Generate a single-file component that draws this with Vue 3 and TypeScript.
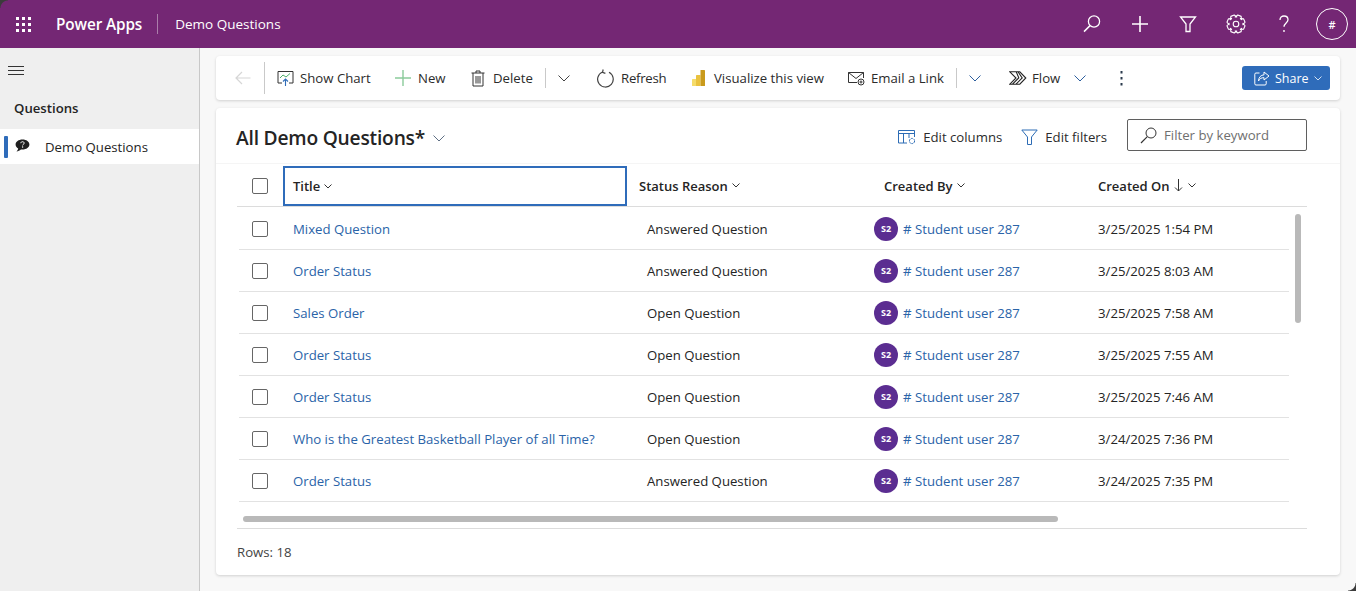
<template>
  <div class="app">
    <header class="topbar">
      <svg class="waffle" width="15" height="15" viewBox="0 0 15 15" fill="#fff">
        <rect v-for="d in waffleDots" :key="d.k" :x="d.x" :y="d.y" width="3" height="3" />
      </svg>
      <span class="brand">Power Apps</span>
      <span class="brand-sep"></span>
      <span class="app-name">Demo Questions</span>
      <div class="top-icons">
        <svg width="20" height="20" viewBox="0 0 20 20" fill="none" stroke="#fff" stroke-width="1.3">
          <circle cx="12" cy="7.5" r="5.6" />
          <path d="M8 11.6 2 17.6" stroke-width="1.5" />
        </svg>
        <svg width="20" height="20" viewBox="0 0 20 20" stroke="#fff" stroke-width="1.6">
          <path d="M10 2v16M2 10h16" />
        </svg>
        <svg width="20" height="20" viewBox="0 0 20 20" fill="none" stroke="#fff" stroke-width="1.3">
          <path d="M2.5 3h15l-5.5 7v7.5H8V10z" />
        </svg>
        <svg width="20" height="20" viewBox="0 0 20 20" fill="none" stroke="#fff" stroke-width="1.1">
          <circle cx="10" cy="10" r="2.8" />
          <path :d="gearPath" stroke-linejoin="round" />
        </svg>
        <svg width="20" height="20" viewBox="0 0 20 20" fill="none" stroke="#fff" stroke-width="1.3">
          <path d="M6 6c0-2.500 1.800-4 4-4s4 1.500 4 3.800c0 3-4 3.400-4 7" />
          <circle cx="10" cy="17" r=".9" fill="#fff" stroke="none" />
        </svg>
      </div>
      <div class="me">#</div>
    </header>

    <div class="body">
      <aside class="sidebar">
        <svg class="burger" width="16" height="10" viewBox="0 0 16 10" stroke="#333" stroke-width="1">
          <path d="M0 .5h16M0 4.500h16M0 8.500h16" />
        </svg>
        <div class="nav-group">Questions</div>
        <div class="nav-item">
          <span class="nav-mark"></span>
          <svg width="15" height="14" viewBox="0 0 15 14">
            <path d="M7.500.5C3.600.5.600 2.700.6 5.600c0 1.700 1 3.100 2.600 4-.1 1-.7 2-1.700 2.900 1.700-.2 3.300-1 4.400-2 .5.100 1 .1 1.600.1 3.900 0 6.900-2.200 6.900-5S11.400.5 7.500.5z" fill="#1f1f1f" />
            <path d="M5.800 4.200c.1-1 .8-1.500 1.700-1.500s1.700.6 1.700 1.400c0 1.200-1.600 1.200-1.600 2.300" fill="none" stroke="#fff" stroke-width="1" />
            <circle cx="7.600" cy="8" r=".7" fill="#fff" />
          </svg>
          <span class="nav-text">Demo Questions</span>
        </div>
      </aside>

      <main class="main">
        <section class="cmdbar">
          <svg class="back" width="16" height="14" viewBox="0 0 16 14" fill="none" stroke="#d6d6d6" stroke-width="1.2">
            <path d="M15.500 7H1M7 1 1 7l6 6" />
          </svg>
          <span class="sep sep-back"></span>

          <div class="cmd cmd-chart">
            <svg width="17" height="16" viewBox="0 0 17 16" fill="none">
              <path d="M5 13H1V1.500h15V13h-4" stroke="#333" stroke-width="1" />
              <path d="M3 8l3-3 3 2 4-3.500" stroke="#4caf6a" stroke-width="1" />
              <path d="M8.500 16V9.500M6 11.500l2.500-2.500 2.500 2.500" stroke="#2f6db8" stroke-width="1.100" />
            </svg>
            <span>Show Chart</span>
          </div>
          <div class="cmd cmd-new">
            <svg width="16" height="16" viewBox="0 0 16 16" stroke="#8bcb9b" stroke-width="1.400">
              <path d="M8 0v16M0 8h16" />
            </svg>
            <span>New</span>
          </div>
          <div class="cmd cmd-delete">
            <svg width="14" height="17" viewBox="0 0 14 17" fill="none" stroke="#333" stroke-width="1">
              <path d="M.5 3h13M5 3V1h4v2M2 3v13h10V3M5 6v7.500M7 6v7.500M9 6v7.500" />
            </svg>
            <span>Delete</span>
          </div>
          <span class="sep sep-delete"></span>
          <svg class="chev chev-delete" width="12" height="7" viewBox="0 0 12 7" fill="none" stroke="#444" stroke-width="1">
            <path d="M.5.500 6 6l5.500-5.500" />
          </svg>

          <div class="cmd cmd-refresh">
            <svg width="18" height="19" viewBox="0 0 18 19" fill="none" stroke="#444" stroke-width="1.200">
              <path d="M12 3.300A7.800 7.800 0 1 1 5.500 3M6.200.5 5.500 3.300 8.400 4.400" />
            </svg>
            <span>Refresh</span>
          </div>
          <div class="cmd cmd-viz">
            <svg width="15" height="16" viewBox="0 0 15 16">
              <rect x="1" y="9" width="4.500" height="7" rx=".6" fill="#f5dc6a" />
              <rect x="5" y="5" width="4.500" height="11" rx=".6" fill="#eac23f" />
              <rect x="9.500" y="0" width="4.500" height="16" rx=".6" fill="#c99a1c" />
            </svg>
            <span>Visualize this view</span>
          </div>
          <div class="cmd cmd-email">
            <svg width="17" height="15" viewBox="0 0 17 15" fill="none" stroke="#333" stroke-width="1">
              <path d="M9 11.500H.5v-10h15V7M.5 1.500 8 7.500l7.500-6" />
              <circle cx="13" cy="11" r="3" />
              <circle cx="13" cy="11" r="1" />
            </svg>
            <span>Email a Link</span>
          </div>
          <span class="sep sep-email"></span>
          <svg class="chev chev-email" width="12" height="7" viewBox="0 0 12 7" fill="none" stroke="#2d5f9e" stroke-width="1">
            <path d="M.5.500 6 6l5.500-5.500" />
          </svg>

          <div class="cmd cmd-flow">
            <svg width="18" height="14" viewBox="0 0 18 14" fill="none" stroke="#222" stroke-width="1.100">
              <path d="M.8.800h10l6 6.200-6 6.200H.8L7 7zM3.500 13.200l6.300-6.400-2.600-6M7 13.200l6.200-6.300L9 .8" />
            </svg>
            <span>Flow</span>
          </div>
          <svg class="chev chev-flow" width="12" height="7" viewBox="0 0 12 7" fill="none" stroke="#2d5f9e" stroke-width="1">
            <path d="M.5.500 6 6l5.500-5.500" />
          </svg>
          <svg class="more" width="3" height="15" viewBox="0 0 3 15" fill="#2b3a4d">
            <rect x=".5" y="0" width="2" height="2.500" />
            <rect x=".5" y="6" width="2" height="2.500" />
            <rect x=".5" y="12" width="2" height="2.500" />
          </svg>

          <div class="share">
            <svg width="16" height="15" viewBox="0 0 16 15" fill="none" stroke="#fff" stroke-width="1">
              <path d="M5.500 2H2a1.200 1.200 0 0 0-1.200 1.200v9.600A1.200 1.200 0 0 0 2 14h9a1.200 1.200 0 0 0 1.200-1.200V10" />
              <path d="M10 1l5 4-5 4V6.700C7.500 6.600 5.700 7.500 4.500 10c.2-3.700 2.300-6 5.500-6.200z" />
            </svg>
            <span>Share</span>
            <svg width="8" height="5" viewBox="0 0 8 5" fill="none" stroke="#fff" stroke-width=".8">
              <path d="M.5.500 4 4l3.500-3.500" />
            </svg>
          </div>
        </section>

        <section class="card">
          <div class="view-head">
            <h1 class="view-title">All Demo Questions*</h1>
            <svg class="view-chev" width="12" height="7" viewBox="0 0 12 7" fill="none" stroke="#5f6f84" stroke-width="1">
              <path d="M.5.500 6 6l5.500-5.500" />
            </svg>
            <div class="view-tools">
              <div class="tool tool-cols">
                <svg width="18" height="16" viewBox="0 0 18 16" fill="none" stroke="#2d6cb5" stroke-width="1">
                  <path d="M9 14H.5V1.500h16V8M.5 4.500h16M5.500 4.500V14M11 4.500V9" />
                  <circle cx="14" cy="12" r="2.600" stroke-dasharray="2 .7" />
                </svg>
                <span>Edit columns</span>
              </div>
              <div class="tool tool-filters">
                <svg width="17" height="16" viewBox="0 0 17 16" fill="none" stroke="#2d6cb5" stroke-width="1">
                  <path d="M.8 1h15.400L10.500 8v7.500h-4V8z" />
                </svg>
                <span>Edit filters</span>
              </div>
              <div class="search">
                <svg width="17" height="17" viewBox="0 0 17 17" fill="none" stroke="#333" stroke-width="1">
                  <circle cx="11" cy="6" r="5" />
                  <path d="M7.300 9.700 1 16" stroke-width="1.200" />
                </svg>
                <span>Filter by keyword</span>
              </div>
            </div>
          </div>

          <div class="grid-wrap">
            <div class="head-row">
              <div class="check-cell"><span class="check"></span></div>
              <div class="h-cell h-title">
                <span>Title</span>
                <svg width="8" height="5" viewBox="0 0 8 5" fill="none" stroke="#333" stroke-width="1"><path d="M.5.500 4 4l3.500-3.500" /></svg>
              </div>
              <div class="h-cell h-status">
                <span>Status Reason</span>
                <svg width="8" height="5" viewBox="0 0 8 5" fill="none" stroke="#333" stroke-width="1"><path d="M.5.500 4 4l3.500-3.500" /></svg>
              </div>
              <div class="h-cell h-by">
                <span>Created By</span>
                <svg width="8" height="5" viewBox="0 0 8 5" fill="none" stroke="#333" stroke-width="1"><path d="M.5.500 4 4l3.500-3.500" /></svg>
              </div>
              <div class="h-cell h-on">
                <span>Created On</span>
                <svg class="sort" width="9" height="13" viewBox="0 0 9 13" fill="none" stroke="#333" stroke-width="1"><path d="M4.500 0v12M1 8.500l3.500 3.500L8 8.500" /></svg>
                <svg width="8" height="5" viewBox="0 0 8 5" fill="none" stroke="#333" stroke-width="1"><path d="M.5.500 4 4l3.500-3.500" /></svg>
              </div>
            </div>

            <div class="rows">
              <div v-for="(r, i) in rows" :key="i" class="row">
                <div class="check-cell check-row"><span class="check"></span></div>
                <a class="c-title">{{ r.title }}</a>
                <div class="c-status">{{ r.status }}</div>
                <div class="c-by">
                  <span class="avatar">S2</span>
                  <a># Student user 287</a>
                </div>
                <div class="c-on">{{ r.created }}</div>
              </div>
            </div>

            <div class="vscroll"></div>
            <div class="hscroll-track"><div class="hscroll"></div></div>
          </div>

          <div class="footer">Rows: 18</div>
        </section>
      </main>
    </div>
    <span class="corner-tl"></span>
    <span class="corner-br"></span>
  </div>
</template>

<script setup lang="ts">
interface Row {
  title: string
  status: string
  created: string
}

const waffleDots = [0, 1, 2].flatMap((y) =>
  [0, 1, 2].map((x) => ({ k: `${x}${y}`, x: x * 6, y: y * 6 }))
)

// 8-tooth gear outline for the settings icon
const gearPath = (() => {
  const pts: string[] = []
  for (let i = 0; i < 8; i++) {
    const a = (i * Math.PI) / 4 + Math.PI / 8
    const w = 0.2
    const spots: [number, number][] = [
      [a - 0.5, 7],
      [a - w, 9.2],
      [a + w, 9.2],
      [a + 0.5, 7]
    ]
    for (const [ang, rad] of spots) {
      pts.push(`${(10 + rad * Math.cos(ang)).toFixed(2)} ${(10 + rad * Math.sin(ang)).toFixed(2)}`)
    }
  }
  return `M${pts.join('L')}Z`
})()

const rows: Row[] = [
  { title: 'Mixed Question', status: 'Answered Question', created: '3/25/2025 1:54 PM' },
  { title: 'Order Status', status: 'Answered Question', created: '3/25/2025 8:03 AM' },
  { title: 'Sales Order', status: 'Open Question', created: '3/25/2025 7:58 AM' },
  { title: 'Order Status', status: 'Open Question', created: '3/25/2025 7:55 AM' },
  { title: 'Order Status', status: 'Open Question', created: '3/25/2025 7:46 AM' },
  { title: 'Who is the Greatest Basketball Player of all Time?', status: 'Open Question', created: '3/24/2025 7:36 PM' },
  { title: 'Order Status', status: 'Answered Question', created: '3/24/2025 7:35 PM' }
]
</script>

<style>
html, body { margin: 0; overflow: hidden; }
</style>

<style scoped>
.app {
  position: relative;
  width: 1356px;
  height: 591px;
  overflow: hidden;
  display: flex;
  flex-direction: column;
  font-family: "Open Sans", "Noto Sans", sans-serif;
  font-size: 13.2px;
  color: #242424;
  background: #f8f8f8;
}
.topbar {
  height: 48px;
  flex: none;
  display: flex;
  align-items: center;
  background: #742774;
  color: #fff;
}
.waffle { margin-left: 16px; }
.brand { margin-left: 25px; font-size: 15.3px; font-weight: 600; letter-spacing: -0.1px; }
.brand-sep { width: 1px; height: 20px; margin-left: 15px; background: rgba(255, 255, 255, 0.4); }
.app-name { margin-left: 17px; font-size: 13.5px; }
.top-icons { margin-left: auto; display: flex; gap: 28px; }
.me {
  width: 30px;
  height: 30px;
  margin: 0 8px 0 22px;
  border: 1px solid #fff;
  border-radius: 50%;
  display: flex;
  align-items: center;
  justify-content: center;
  font-size: 11px;
  font-weight: 600;
}
.body { flex: 1; display: flex; min-height: 0; }
.sidebar {
  width: 199px;
  flex: none;
  background: #efefef;
  border-right: 1px solid #c8c8c8;
}
.burger { display: block; margin: 18px 0 0 8px; }
.nav-group { margin: 23px 0 0 14px; font-weight: 600; height: 18px; line-height: 18px; }
.nav-item {
  margin-top: 12px;
  height: 35px;
  background: #fff;
  display: flex;
  align-items: center;
  position: relative;
}
.nav-mark { width: 4px; height: 22px; margin-left: 4px; background: #2f6cba; border-radius: 1px; }
.nav-item svg { margin: -2px 0 0 7px; }
.nav-text { margin-left: 15px; }
.main { flex: 1; padding: 8px 16px 16px; display: flex; flex-direction: column; gap: 8px; min-width: 0; }
.cmdbar {
  height: 44px;
  flex: none;
  display: flex;
  align-items: center;
  background: #fff;
  border-radius: 4px;
  box-shadow: 0 1px 3px rgba(0, 0, 0, 0.16);
  white-space: nowrap;
}
.back { margin-left: 19px; }
.sep { width: 1px; height: 20px; background: #c9c9c9; flex: none; }
.sep-back { margin-left: 13px; height: 32px; }
.cmd { display: flex; align-items: center; color: #2b2b2b; }
.cmd span { width: var(--w); }
.cmd-chart { margin-left: 12px; gap: 6px; --w: 71px; }
.cmd-new { margin-left: 24px; gap: 7px; --w: 28px; }
.cmd-delete { margin-left: 25px; gap: 8px; --w: 40px; }
.sep-delete { margin-left: 12px; }
.chev-delete { margin-left: 12px; }
.cmd-refresh { margin-left: 27px; gap: 6px; --w: 45px; }
.cmd-refresh span { letter-spacing: -0.25px; }
.cmd-viz { margin-left: 25px; gap: 8px; --w: 110px; }
.cmd-email { margin-left: 24px; gap: 6px; --w: 73px; }
.sep-email { margin-left: 12px; }
.chev-email { margin-left: 12px; }
.cmd-flow { margin-left: 28px; gap: 5px; --w: 28px; }
.chev-flow { margin-left: 14px; }
.more { margin-left: 34px; }
.share {
  margin: 0 10px 0 auto;
  width: 88px;
  height: 24px;
  box-sizing: border-box;
  padding-left: 12px;
  display: flex;
  align-items: center;
  gap: 5px;
  background: #2f6cba;
  color: #fff;
  border-radius: 3px;
  font-size: 12.5px;
}
.card {
  flex: 1;
  display: flex;
  flex-direction: column;
  background: #fff;
  border-radius: 4px;
  box-shadow: 0 1px 3px rgba(0, 0, 0, 0.16);
  min-height: 0;
}
.view-head {
  height: 56px;
  flex: none;
  display: flex;
  align-items: center;
  padding: 0 33px 0 20px;
  border-bottom: 1px solid #f5f5f5;
  box-sizing: border-box;
}
.view-title { margin: 4px 0 0; font-size: 19.2px; font-weight: 600; color: #242424; letter-spacing: -0.2px; }
.view-chev { margin: 5px 0 0 8px; }
.view-tools { margin-left: auto; display: flex; align-items: center; }
.tool { display: flex; align-items: center; margin-top: 2px; color: #2b2b2b; }
.tool-cols { gap: 7px; }
.tool-filters { margin-left: 19px; gap: 7px; }
.search {
  margin: -1px 0 0 20px;
  width: 180px;
  height: 32px;
  box-sizing: border-box;
  border: 1px solid #5f5f5f;
  border-radius: 2px;
  display: flex;
  align-items: center;
  gap: 7px;
  padding-left: 12px;
  color: #6f6f6f;
}
.grid-wrap { position: relative; margin: 1px 33px 0 21px; }
.head-row {
  height: 42px;
  display: grid;
  grid-template-columns: 46px 344px 235px 224px 1fr;
  border-bottom: 1px solid #dcdcdc;
  box-sizing: border-box;
  font-weight: 600;
  font-size: 13px;
}
.check-cell { display: flex; align-items: center; padding-left: 15px; }
.check-row { padding-left: 13px; }
.check {
  width: 16px;
  height: 16px;
  box-sizing: border-box;
  border: 1px solid #666;
  border-radius: 2px;
}
.h-cell { display: flex; align-items: center; gap: 4px; }
.h-title {
  padding-left: 8px;
  border: 2px solid #2f6cba;
  box-sizing: border-box;
  margin-top: 1px;
  height: 40px;
}
.h-status { padding-left: 12px; }
.h-by { padding-left: 22px; }
.h-on { padding-left: 12px; gap: 5px; }
.rows { padding-top: 1px; }
.row {
  height: 42px;
  box-sizing: border-box;
  width: 1050px;
  margin-left: 2px;
  display: grid;
  grid-template-columns: 44px 344px 235px 224px 1fr;
  align-items: center;
  border-bottom: 1px solid #e2e2e2;
}
.row a { color: #2a63a8; }
.c-title { padding-left: 10px; }
.c-status { padding-left: 20px; }
.c-by { padding-left: 12px; display: flex; align-items: center; gap: 5px; }
.c-on { padding-left: 12px; }
.avatar {
  width: 24px;
  height: 24px;
  flex: none;
  border-radius: 50%;
  background: #5b2d91;
  color: #fff;
  display: flex;
  align-items: center;
  justify-content: center;
  font-size: 9px;
  font-weight: 700;
}
.vscroll {
  position: absolute;
  left: 1058px;
  top: 49px;
  width: 6px;
  height: 109px;
  background: #b9b9b9;
  border-radius: 3px;
}
.hscroll-track { height: 27px; border-bottom: 1px solid #dcdcdc; box-sizing: border-box; padding-top: 14px; }
.hscroll { margin-left: 6px; width: 815px; height: 6px; background: #b9b9b9; border-radius: 3px; }
.footer { margin: 14px 0 0 21px; color: #444; }
.corner-tl, .corner-br { position: absolute; width: 8px; height: 8px; }
.corner-tl { left: 0; top: 0; background: radial-gradient(circle at 100% 100%, transparent 7px, #3b3b3b 8px); }
.corner-br { right: 0; bottom: 0; background: radial-gradient(circle at 0 0, transparent 7px, #3b3b3b 8px); }
</style>
